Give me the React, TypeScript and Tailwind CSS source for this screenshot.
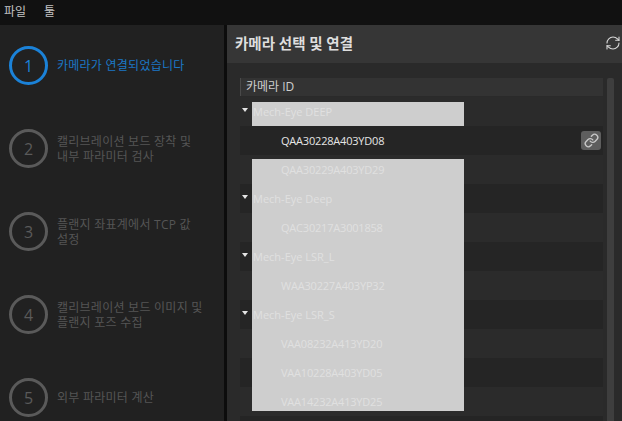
import { Link, RefreshCw } from "lucide-react";

const font = { fontFamily: '"Open Sans", "Noto Sans CJK KR", sans-serif' };

const steps = [
  { n: 1, lines: ["카메라가 연결되었습니다"], active: true },
  { n: 2, lines: ["캘리브레이션 보드 장착 및", "내부 파라미터 검사"] },
  { n: 3, lines: ["플랜지 좌표계에서 TCP 값", "설정"] },
  { n: 4, lines: ["캘리브레이션 보드 이미지 및", "플랜지 포즈 수집"] },
  { n: 5, lines: ["외부 파라미터 계산"] },
];

const rows = [
  { t: "Mech-Eye DEEP", group: true },
  { t: "QAA30228A403YD08", selected: true },
  { t: "QAA30229A403YD29" },
  { t: "Mech-Eye Deep", group: true },
  { t: "QAC30217A3001858" },
  { t: "Mech-Eye LSR_L", group: true },
  { t: "WAA30227A403YP32" },
  { t: "Mech-Eye LSR_S", group: true },
  { t: "VAA08232A413YD20" },
  { t: "VAA10228A403YD05" },
  { t: "VAA14232A413YD25" },
  { t: "" },
];

export default function App() {
  return (
    <div className="relative flex h-[421px] w-[622px] flex-col overflow-hidden bg-[#111111]" style={font}>
      <div className="flex h-[25px] shrink-0 items-center gap-[18px] bg-[#111111] pb-[2px] pl-[4px] text-[12px] text-[#c4c4c4]">
        <span>파일</span>
        <span>툴</span>
      </div>
      <div className="flex min-h-0 flex-1">
        <aside className="flex w-[224px] shrink-0 flex-col gap-[44px] bg-[#212121] pl-[9px] pt-[21px]">
          {steps.map((s) => (
            <div key={s.n} className="flex items-center gap-[9px]">
              <div
                className={
                  s.active
                    ? "flex h-[39px] w-[39px] shrink-0 items-center justify-center rounded-full border-[3px] border-[#1b82d8] text-[16px] text-[#1b82d8]"
                    : "flex h-[39px] w-[39px] shrink-0 items-center justify-center rounded-full border-[3px] border-[#5a5a5a] text-[16px] text-[#5a5a5a]"
                }
              >
                {s.n}
              </div>
              <div
                className={
                  s.active
                    ? "text-[12px] leading-[15px] tracking-[0.25px] text-[#1b78c6]"
                    : "text-[12px] leading-[15px] tracking-[0.25px] text-[#555555]"
                }
              >
                {s.lines.map((l) => (
                  <div key={l}>{l}</div>
                ))}
              </div>
            </div>
          ))}
        </aside>
        <div className="w-[3px] shrink-0 bg-[#0c0c0c]" />
        <main className="flex min-w-0 flex-1 flex-col bg-[#2a2a2a]">
          <header className="flex h-[38px] shrink-0 items-center justify-between bg-[#363636] pl-[8px] pr-[1px]">
            <span className="text-[14.5px] font-bold text-[#dedede]">카메라 선택 및 연결</span>
            <RefreshCw size={16} strokeWidth={1.6} className="mb-[2px] text-[#d8d8d8]" />
          </header>
          <div className="flex min-h-0 flex-1 gap-[4px] pl-[13px] pr-[8px] pt-[15px]">
            <div className="min-w-0 flex-1">
              <div className="mb-[1px] flex h-[18px] items-center border-l border-[#4a4a4a] bg-[#333333] pl-[5px] text-[12px] text-[#cfcfcf]">
                카메라 ID
              </div>
              {rows.map((r, i) => (
                <div
                  key={i}
                  className={
                    i % 2 === 0
                      ? "relative flex h-[29px] items-center bg-[#2b2b2b] pt-[1px] text-[11px]"
                      : "relative flex h-[29px] items-center bg-[#252525] pt-[1px] text-[11px]"
                  }
                >
                  {r.group && (
                    <svg width="6" height="4" viewBox="0 0 6 4" className="absolute left-[2px] top-[11px]">
                      <path d="M0 0h6L3 4z" fill="#e4e4e4" />
                    </svg>
                  )}
                  <span
                    className={
                      r.selected
                        ? "relative z-10 pl-[41px] tracking-[-0.2px] text-[#e6e6e6]"
                        : r.group
                          ? "relative z-10 pl-[13px] text-[#e0e0e0] antialiased"
                          : "relative z-10 pl-[41px] tracking-[-0.2px] text-[#e0e0e0] antialiased"
                    }
                  >
                    {r.t}
                  </span>
                  {r.selected && (
                    <div className="absolute right-[2px] top-[5px] flex h-[19px] w-[20px] items-center justify-center rounded-[3px] bg-[#5e5e5e]">
                      <Link size={15} strokeWidth={2.2} className="text-[#c9c9c9]" />
                    </div>
                  )}
                </div>
              ))}
            </div>
            <div className="h-full w-[7px] shrink-0 rounded-t-[2px] bg-[#3e3e3e]" />
          </div>
        </main>
      </div>
      <div className="absolute left-[252px] top-[102px] h-[24px] w-[212px] bg-[#cecece]" />
      <div className="absolute left-[252px] top-[159px] h-[252px] w-[212px] bg-[#cecece]" />
    </div>
  );
}
